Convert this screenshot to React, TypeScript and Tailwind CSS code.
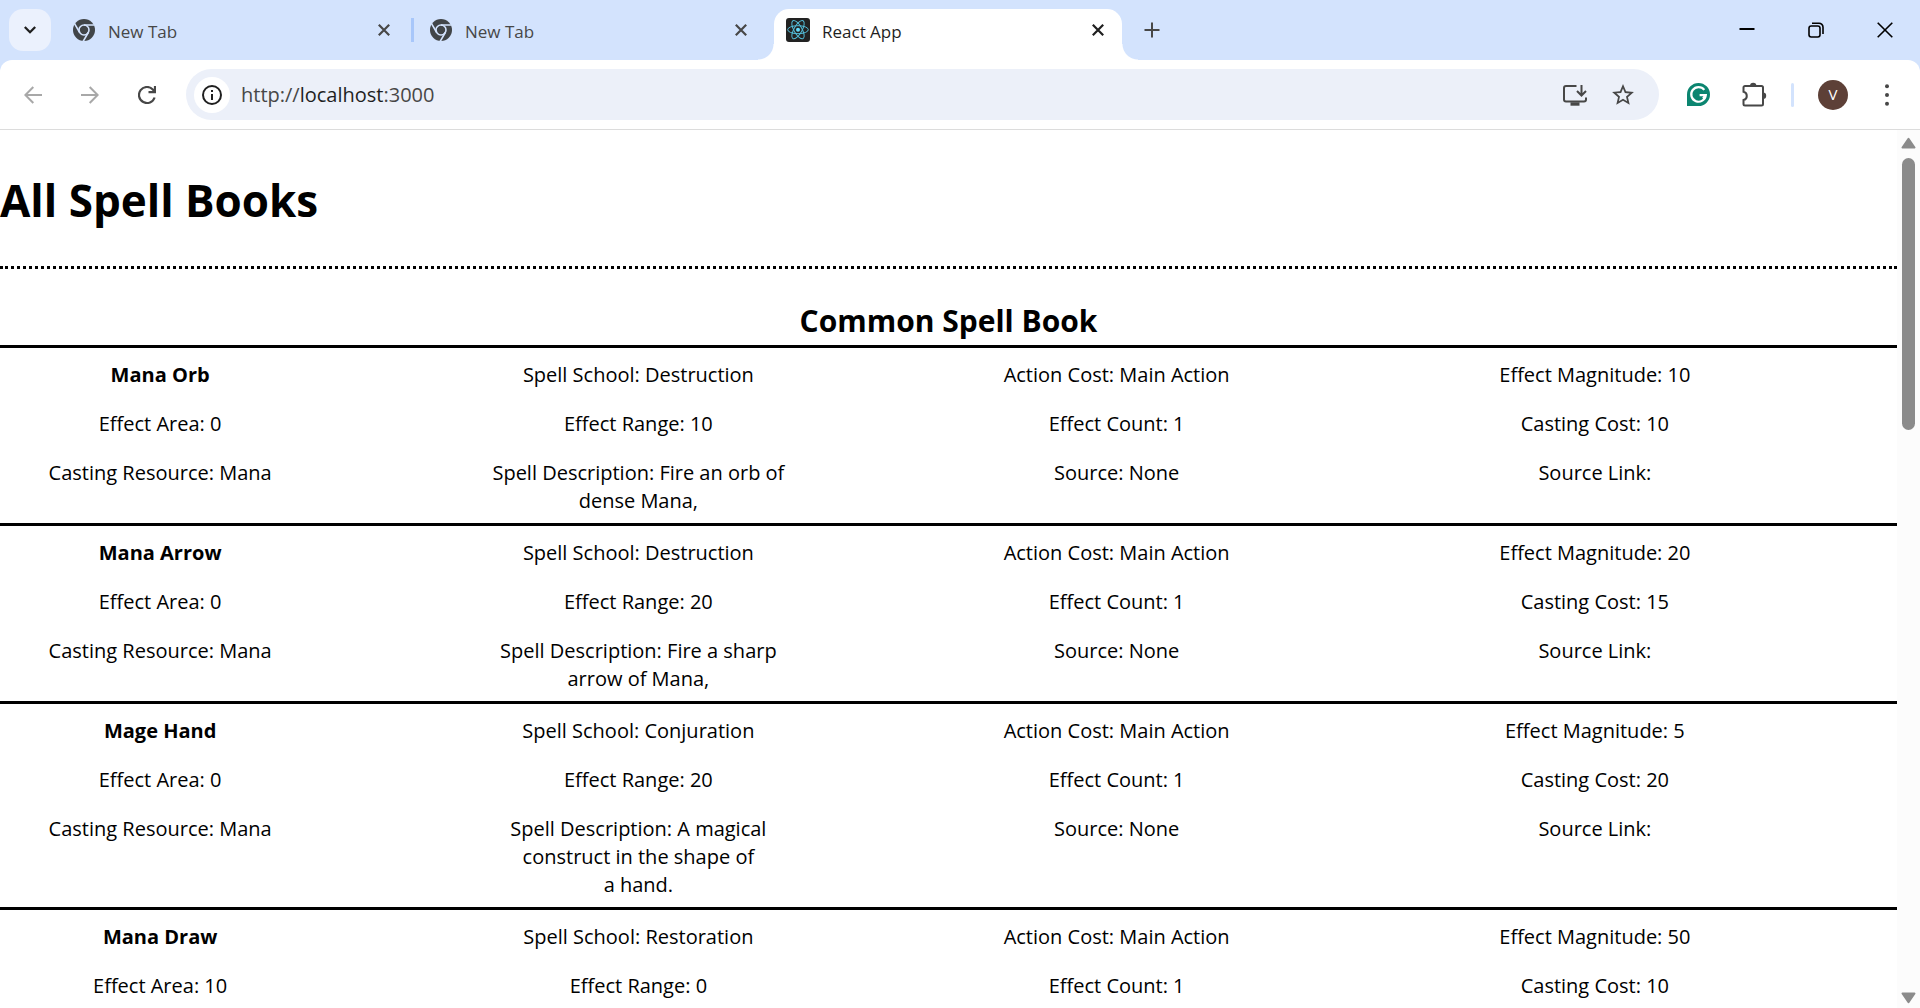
import React from "react";

type Spell = {
  name: string;
  school: string;
  magnitude: number;
  area: number;
  range: number;
  cost: number;
  description?: string;
};

const spells: Spell[] = [
  { name: "Mana Orb", school: "Destruction", magnitude: 10, area: 0, range: 10, cost: 10, description: "Fire an orb of dense Mana," },
  { name: "Mana Arrow", school: "Destruction", magnitude: 20, area: 0, range: 20, cost: 15, description: "Fire a sharp arrow of Mana," },
  { name: "Mage Hand", school: "Conjuration", magnitude: 5, area: 0, range: 20, cost: 20, description: "A magical construct in the shape of a\u00a0hand." },
  { name: "Mana Draw", school: "Restoration", magnitude: 50, area: 10, range: 0, cost: 10 },
];

function ChromeIcon() {
  return (
    <svg viewBox="0 0 24 24" className="size-6 shrink-0" aria-hidden="true">
      <circle cx="12" cy="12" r="11" fill="#414548" />
      <g stroke="#d3e3fd" strokeWidth="1.6" fill="none">
        <circle cx="12" cy="12" r="5" />
        <path d="M12 7H22.5M7.7 14.5L2.4 5.3M16.3 14.5L11 23.7" />
      </g>
    </svg>
  );
}

function ReactIcon() {
  return (
    <svg viewBox="0 0 24 24" className="size-6 shrink-0" aria-hidden="true">
      <rect width="24" height="24" rx="3" fill="#222" />
      <circle cx="12" cy="11.7" r="2" fill="#61dafb" />
      <g stroke="#53bdd9" strokeWidth="1" fill="none">
        <ellipse cx="12" cy="11.7" rx="10.3" ry="4" />
        <ellipse cx="12" cy="11.7" rx="10.3" ry="4" transform="rotate(60 12 11.7)" />
        <ellipse cx="12" cy="11.7" rx="10.3" ry="4" transform="rotate(120 12 11.7)" />
      </g>
    </svg>
  );
}

function Tab({ title, active }: { title: string; active?: boolean }) {
  return (
    <div
      className={
        active
          ? "relative flex h-[51px] w-[348px] items-start rounded-t-[15px] bg-white px-3 pt-[9px] text-[#1f1f1f]"
          : "flex h-[51px] w-[348px] items-start px-3 pt-[9px] text-[#474747]"
      }
    >
      {active && (
        <>
          <span className="absolute bottom-0 -left-4 size-4 bg-[radial-gradient(circle_at_0_0,#d3e3fd_15px,#fff_16px)]" />
          <span className="absolute -right-4 bottom-0 size-4 bg-[radial-gradient(circle_at_100%_0,#d3e3fd_15px,#fff_16px)]" />
        </>
      )}
      {active ? <ReactIcon /> : <ChromeIcon />}
      <span className="ml-3 flex-1 text-[17px] leading-7">{title}</span>
      <button aria-label={"Close " + title} className="flex size-6 items-center justify-center">
        <svg viewBox="0 0 12 12" className="size-3" stroke="currentColor" strokeWidth="2.2" aria-hidden="true">
          <path d="M.8.8L11.2 11.2M11.2.8L.8 11.2" />
        </svg>
      </button>
    </div>
  );
}

function TabStrip() {
  return (
    <header className="flex h-[60px] shrink-0 items-start bg-[#d3e3fd] pt-[9px] pr-px pl-[9px]">
      <button aria-label="Search tabs" className="mr-[9px] flex size-[42px] items-center justify-center rounded-[14px] bg-[#ebf1fd]">
        <svg viewBox="0 0 12 8" className="h-2 w-3" fill="none" stroke="#1f1f1f" strokeWidth="2.3" aria-hidden="true">
          <path d="M.8 1L6 6.2L11.2 1" />
        </svg>
      </button>
      <Tab title="New Tab" />
      <span className="mx-[3px] mt-[9px] h-6 w-[3px] bg-[#a8c7fa]" />
      <Tab title="New Tab" />
      <span className="w-[9px]" />
      <Tab title="React App" active />
      <button aria-label="New tab" className="ml-[9px] flex size-[42px] items-center justify-center">
        <svg viewBox="0 0 16 16" className="size-4" stroke="#474747" strokeWidth="2" aria-hidden="true">
          <path d="M8 .5V15.5M.5 8H15.5" />
        </svg>
      </button>
      <div className="ml-auto flex">
        <button aria-label="Minimize" className="flex h-[42px] w-[69px] items-center justify-center">
          <svg viewBox="0 0 16 16" className="size-4" stroke="#000" strokeWidth="2" aria-hidden="true">
            <path d="M.5 7H15.5" />
          </svg>
        </button>
        <button aria-label="Restore" className="flex h-[42px] w-[69px] items-center justify-center">
          <svg viewBox="0 0 16 16" className="size-4" fill="none" stroke="#000" strokeWidth="1.6" aria-hidden="true">
            <rect x="1" y="4" width="11" height="11" rx="2.2" />
            <path d="M4 1.2H11A4 4 0 0 1 15 5.2V12" />
          </svg>
        </button>
        <button aria-label="Close" className="flex h-[42px] w-[69px] items-center justify-center">
          <svg viewBox="0 0 16 16" className="size-4" stroke="#000" strokeWidth="1.6" aria-hidden="true">
            <path d="M.7.7L15.3 15.3M15.3.7L.7 15.3" />
          </svg>
        </button>
      </div>
    </header>
  );
}

function Toolbar() {
  return (
    <div className="shrink-0 bg-[#d3e3fd]">
      <div className="flex h-[70px] items-center rounded-t-xl border-b border-[#dcdcdc] bg-white pr-[18px] pl-3">
        <button aria-label="Back" disabled className="flex h-10 w-[42px] items-center justify-center">
          <svg viewBox="0 0 18 18" className="size-[18px]" fill="none" stroke="#a8a8a8" strokeWidth="2" aria-hidden="true">
            <path d="M18 9H1.8M9.3 1L1.3 9L9.3 17" />
          </svg>
        </button>
        <button aria-label="Forward" disabled className="ml-[15px] flex h-10 w-[42px] items-center justify-center">
          <svg viewBox="0 0 18 18" className="size-[18px]" fill="none" stroke="#a8a8a8" strokeWidth="2" aria-hidden="true">
            <path d="M0 9H16.2M8.7 1L16.7 9L8.7 17" />
          </svg>
        </button>
        <button aria-label="Reload" className="ml-[15px] flex h-10 w-[42px] items-center justify-center">
          <svg viewBox="0 0 18 18" className="size-[18px]" fill="none" stroke="#474747" strokeWidth="2.2" aria-hidden="true">
            <path d="M16.6 11.5A8 8 0 1 1 14.8 3.5L17 6M17 0V6.2H10.5" />
          </svg>
        </button>
        <div className="ml-[18px] flex h-[51px] flex-1 items-center rounded-full bg-[#ecf0f9] pr-6 pl-2">
          <button aria-label="View site information" className="flex size-9 items-center justify-center rounded-full bg-white">
            <svg viewBox="0 0 20 20" className="size-5" fill="none" stroke="#1f1f1f" strokeWidth="2" aria-hidden="true">
              <circle cx="10" cy="10" r="9" />
              <path d="M10 9V15M10 5V7" />
            </svg>
          </button>
          <div className="ml-[11px] flex-1 text-[20px] leading-7 text-[#474747]">
            http://<span className="text-[#1f1f1f]">localhost</span>:3000
          </div>
          <button aria-label="Install app">
            <svg viewBox="0 0 24 22" className="h-[22px] w-6" fill="none" stroke="#474747" strokeWidth="2" aria-hidden="true">
              <path d="M13.5 2H3A2 2 0 0 0 1 4V15.5A2 2 0 0 0 3 17.5H21A2 2 0 0 0 23 15.5V13.5" />
              <path d="M18.5 1V11M14 7L18.5 11.5L23 7" />
              <path d="M7.5 20H16.5" strokeWidth="3.4" />
            </svg>
          </button>
          <button aria-label="Bookmark this tab" className="ml-6">
            <svg viewBox="1 1 22 22" className="size-6" fill="#474747" aria-hidden="true">
              <path d="M22 9.24l-7.19-.62L12 2 9.19 8.63 2 9.24l5.46 4.73L5.82 21 12 17.27 18.18 21l-1.63-7.03L22 9.24zM12 15.4l-3.76 2.27 1-4.28-3.32-2.88 4.38-.38L12 6.1l1.71 4.04 4.38.38-3.32 2.88 1 4.28L12 15.4z" />
            </svg>
          </button>
        </div>
        <button aria-label="Grammarly" className="ml-7">
          <svg viewBox="0 0 23 23" className="size-[23px]" aria-hidden="true">
            <path d="M11.5 0A11.5 11.5 0 1 1 11.5 23H0V11.5A11.5 11.5 0 0 1 11.5 0Z" fill="#0b8570" />
            <path d="M17.3 6.9A7.3 7.3 0 1 0 18.8 12.2H12.6M18.6 12.4L16 15.4" fill="none" stroke="#fff" strokeWidth="2.2" />
          </svg>
        </button>
        <button aria-label="Extensions" className="ml-8">
          <svg viewBox="0 0 25 25" className="size-[25px]" fill="none" aria-hidden="true">
            <path d="M3 4H19.5A1.5 1.5 0 0 1 21 5.5V22A1.5 1.5 0 0 1 19.500 23.500H3A1.500 1.500 0 0 1 1.500 22V18A4.200 4.200 0 0 0 1.500 9.800V5.500A1.500 1.500 0 0 1 3 4Z" stroke="#474747" strokeWidth="2" />
            <path d="M8 4A3.200 3.200 0 0 1 14.400 4ZM21 10.500A3.200 3.200 0 0 1 21 16.900Z" fill="#474747" />
          </svg>
        </button>
        <span className="ml-6 h-6 w-[3px] rounded-full bg-[#d3e3fd]" />
        <button aria-label="Profile" className="ml-6 flex size-[30px] items-center justify-center rounded-full bg-[#5d4037] text-[15px] text-white">
          V
        </button>
        <button aria-label="Menu" className="ml-6 flex w-[30px] justify-center">
          <svg viewBox="0 0 4 22" className="h-[22px] w-1" fill="#474747" aria-hidden="true">
            <circle cx="2" cy="2.200" r="2" />
            <circle cx="2" cy="11" r="2" />
            <circle cx="2" cy="19.800" r="2" />
          </svg>
        </button>
      </div>
    </div>
  );
}

function SpellRow({ spell }: { spell: Spell }) {
  return (
    <li className="grid grid-cols-4 gap-x-[158px] gap-y-[21px] border-t-[3px] border-black pt-[13px] pr-[142px] pb-2 text-center text-[20px] leading-7 *:px-2">
      <p className="font-bold">{spell.name}</p>
      <p>{`Spell School: ${spell.school}`}</p>
      <p>Action Cost: Main Action</p>
      <p>{`Effect Magnitude: ${spell.magnitude}`}</p>
      <p>{`Effect Area: ${spell.area}`}</p>
      <p>{`Effect Range: ${spell.range}`}</p>
      <p>Effect Count: 1</p>
      <p>{`Casting Cost: ${spell.cost}`}</p>
      {spell.description && (
        <>
          <p>Casting Resource: Mana</p>
          <p>{`Spell Description: ${spell.description}`}</p>
          <p>Source: None</p>
          <p>Source Link:</p>
        </>
      )}
    </li>
  );
}

function Scrollbar() {
  return (
    <div className="flex w-[23px] shrink-0 flex-col items-center bg-[#fcfcfc] pt-[7px] pb-1" aria-hidden="true">
      <svg viewBox="0 0 15 12" className="h-3 w-[15px]" fill="#8b8b8b" stroke="#8b8b8b" strokeWidth="2" strokeLinejoin="round">
        <path d="M7.500 1.800L13.500 10.500H1.500Z" />
      </svg>
      <div className="mt-[9px] h-[272px] w-[13px] rounded-full bg-[#8b8b8b]" />
      <svg viewBox="0 0 15 12" className="mt-auto h-3 w-[15px]" fill="#8b8b8b" stroke="#8b8b8b" strokeWidth="2" strokeLinejoin="round">
        <path d="M7.500 10.200L13.500 1.500H1.500Z" />
      </svg>
    </div>
  );
}

export default function App() {
  return (
    <div className="flex h-screen flex-col overflow-hidden bg-white font-['Open_Sans','Noto_Sans',sans-serif] text-black">
      <TabStrip />
      <Toolbar />
      <div className="flex min-h-0 flex-1">
        <main className="min-w-0 flex-1 overflow-hidden">
          <h1 className="pt-10 pb-9 text-[44px] leading-[60px] font-bold">All Spell Books</h1>
          <hr className="border-t-[3px] border-dotted border-black" />
          <h2 className="pt-[31px] pb-[3px] text-center text-[30px] leading-[42px] font-bold">Common Spell Book</h2>
          <ul>
            {spells.map((spell) => (
              <SpellRow key={spell.name} spell={spell} />
            ))}
          </ul>
        </main>
        <Scrollbar />
      </div>
    </div>
  );
}
